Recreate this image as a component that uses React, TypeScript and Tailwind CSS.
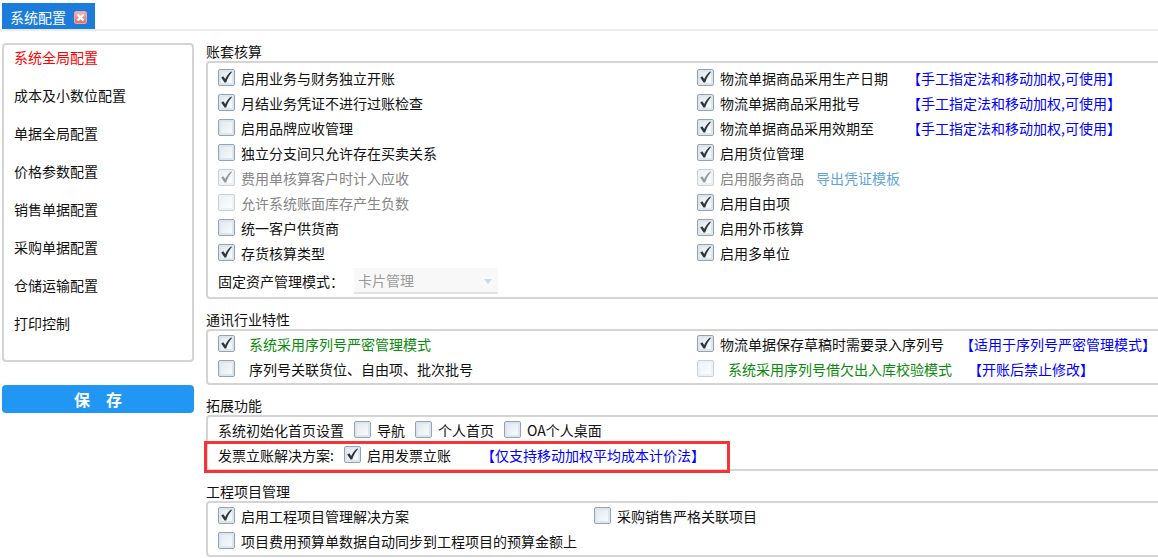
import React, { useState } from 'react';
import clsx from 'clsx';

const MENU = ['系统全局配置', '成本及小数位配置', '单据全局配置', '价格参数配置', '销售单据配置', '采购单据配置', '仓储运输配置', '打印控制'];

interface CheckProps {
  label: string;
  checked?: boolean;
  disabled?: boolean;
  wide?: boolean;
  className?: string;
}

const Check: React.FC<CheckProps> = ({ label, checked = false, disabled = false, wide = false, className }) => {
  const [on, setOn] = useState(checked);
  return (
    <label className={clsx('flex items-center whitespace-nowrap', wide ? 'gap-[14px]' : 'gap-1.5', className)}>
      <span className={clsx('grid shrink-0', disabled && 'opacity-50')}>
        <input
          type="checkbox" checked={on} disabled={disabled} onChange={e => setOn(e.target.checked)}
          className="peer col-start-1 row-start-1 size-[17px] appearance-none rounded-xs border border-[#95a3b1] bg-linear-to-br from-[#dfe7ee] to-[#fcfdfe] shadow-[inset_0_0_0_2px_#dde6ee]"
        />
        <svg viewBox="0 0 17 17" className="pointer-events-none invisible col-start-1 row-start-1 size-[17px] peer-checked:visible">
          <path d="M3.2 8.6 5.3 7.3 7.2 10C8.5 7.1 10.4 4.3 13.2 2.4L14 3.1C11.6 5.8 9.7 9 8.2 13.5L6.5 13.6Z" fill="#30363c" />
        </svg>
      </span>
      <span className={clsx(disabled && !wide && 'text-[#858585]', wide && (checked || disabled) && 'text-[#0a8a0a]')}>{label}</span>
    </label>
  );
};

const Hint: React.FC<{ children: React.ReactNode }> = ({ children }) => (
  <span className="whitespace-nowrap text-[#0000ff]">{children}</span>
);

const Row: React.FC<{ className?: string; children: React.ReactNode }> = ({ className, children }) => (
  <div className={clsx('flex h-[25px] items-center', className)}>{children}</div>
);

const Section: React.FC<{ title: string; children: React.ReactNode }> = ({ title, children }) => (
  <section>
    <h2 className="h-5 leading-5">{title}</h2>
    <div className="rounded-sm border-2 border-[#d4d4d4] pl-2.5">{children}</div>
  </section>
);

const App: React.FC = () => {
  const [active, setActive] = useState(0);

  return (
    <div className="min-h-screen overflow-hidden bg-white font-['Noto_Sans_CJK_SC',sans-serif] text-sm leading-5 text-[#111]">
      {/* Tab bar */}
      <div className="border-b-2 border-[#ececec] pt-[3px] pl-0.5">
        <div className="flex h-[26px] w-[93px] items-center gap-2 bg-[#1c7cdc] pt-0.5 pl-2 text-white">
          <span>系统配置</span>
          <button type="button" aria-label="关闭" className="flex size-[13px] items-center justify-center rounded-xs border border-[#eba3a3] bg-linear-to-b from-[#efb4b0] to-[#d96f70]">
            <svg viewBox="0 0 9 9" className="size-[9px]">
              <path d="M1.5 1.5 7.5 7.5M7.5 1.5 1.5 7.5" stroke="#fff" strokeWidth="2.4" />
            </svg>
          </button>
        </div>
      </div>

      <div className="flex gap-3 pt-2.5 pl-0.5">
        {/* Sidebar */}
        <aside className="w-48 shrink-0 pt-0.5">
          <nav className="flex h-[319px] flex-col items-start gap-[18px] rounded-sm border-2 border-[#d4d4d4] px-2.5 pt-0.5">
            {MENU.map((item, i) => (
              <button key={item} type="button" onClick={() => setActive(i)} className={i === active ? 'text-[#ff0000]' : ''}>
                {item}
              </button>
            ))}
          </nav>
          <button type="button" className="mt-[23px] h-7 w-full rounded-sm bg-[#2196f3] text-base font-bold text-white">保　存</button>
        </aside>

        {/* Settings */}
        <main className="-mr-5 flex min-w-0 flex-1 flex-col gap-2.5">
          <Section title="账套核算">
            <div className="grid grid-cols-2 pt-0.5">
              <div>
                <Row><Check label="启用业务与财务独立开账" checked /></Row>
                <Row><Check label="月结业务凭证不进行过账检查" checked /></Row>
                <Row><Check label="启用品牌应收管理" /></Row>
                <Row><Check label="独立分支间只允许存在买卖关系" /></Row>
                <Row><Check label="费用单核算客户时计入应收" checked disabled /></Row>
                <Row><Check label="允许系统账面库存产生负数" disabled /></Row>
                <Row><Check label="统一客户供货商" /></Row>
                <Row><Check label="存货核算类型" checked /></Row>
              </div>
              <div>
                <Row><Check label="物流单据商品采用生产日期" checked className="w-[210px]" /><Hint>【手工指定法和移动加权,可使用】</Hint></Row>
                <Row><Check label="物流单据商品采用批号" checked className="w-[210px]" /><Hint>【手工指定法和移动加权,可使用】</Hint></Row>
                <Row><Check label="物流单据商品采用效期至" checked className="w-[210px]" /><Hint>【手工指定法和移动加权,可使用】</Hint></Row>
                <Row><Check label="启用货位管理" checked /></Row>
                <Row className="gap-3"><Check label="启用服务商品" checked disabled /><a href="#" className="text-[#5fa5dc]">导出凭证模板</a></Row>
                <Row><Check label="启用自由项" checked /></Row>
                <Row><Check label="启用外币核算" checked /></Row>
                <Row><Check label="启用多单位" checked /></Row>
              </div>
            </div>
            <div className="flex h-8 items-center gap-2.5">
              <label htmlFor="assetMode">固定资产管理模式：</label>
              <div className="relative">
                <select id="assetMode" disabled className="h-[26px] w-36 appearance-none border-b-2 border-[#e2e2e2] bg-[#f8f8f8] pl-1 text-[#9a9a9a] opacity-100">
                  <option>卡片管理</option>
                </select>
                <svg viewBox="0 0 8 5" className="pointer-events-none absolute top-[11px] right-1.5 h-[5px] w-2">
                  <path d="M0 0H8L4 5Z" fill="#c9d9e6" />
                </svg>
              </div>
            </div>
          </Section>

          <Section title="通讯行业特性">
            <div className="grid grid-cols-2 pb-0.5">
              <Row><Check label="系统采用序列号严密管理模式" checked wide /></Row>
              <Row className="gap-4"><Check label="物流单据保存草稿时需要录入序列号" checked /><Hint>【适用于序列号严密管理模式】</Hint></Row>
              <Row><Check label="序列号关联货位、自由项、批次批号" wide /></Row>
              <Row className="gap-4"><Check label="系统采用序列号借欠出入库校验模式" disabled wide /><Hint>【开账后禁止修改】</Hint></Row>
            </div>
          </Section>

          <Section title="拓展功能">
            <div className="pb-0.5">
              <Row className="gap-2.5">
                <span>系统初始化首页设置</span>
                <Check label="导航" />
                <Check label="个人首页" />
                <Check label="OA个人桌面" />
              </Row>
              <Row className="relative gap-2.5">
                <span>发票立账解决方案:</span>
                <Check label="启用发票立账" checked />
                <span className="ml-5"><Hint>【仅支持移动加权平均成本计价法】</Hint></span>
                {/* highlight frame */}
                <div className="pointer-events-none absolute -top-px -left-3.5 h-8 w-[526px] border-3 border-[#f53535]" />
              </Row>
            </div>
          </Section>

          <Section title="工程项目管理">
            <div className="grid grid-cols-[376px_1fr] pb-0.5">
              <Row><Check label="启用工程项目管理解决方案" checked /></Row>
              <Row><Check label="采购销售严格关联项目" /></Row>
              <Row><Check label="项目费用预算单数据自动同步到工程项目的预算金额上" /></Row>
            </div>
          </Section>
        </main>
      </div>
    </div>
  );
};

export default App;
